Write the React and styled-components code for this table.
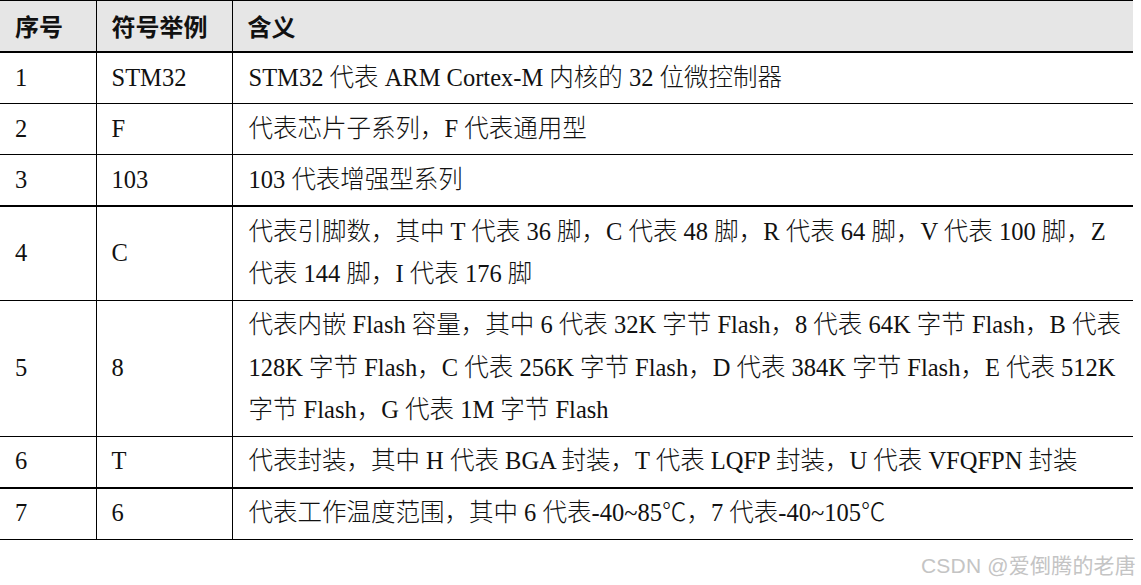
import styled, { createGlobalStyle } from 'styled-components';

const GlobalStyle = createGlobalStyle`
  html, body {
    margin: 0;
    padding: 0;
    background: #ffffff;
  }
  body {
    width: 1141px;
    height: 585px;
    overflow: hidden;
  }
`;

const Page = styled.div`
  position: relative;
  width: 1141px;
  height: 585px;
`;

const Table = styled.table`
  width: 1133px;
  border-collapse: collapse;
  table-layout: fixed;
  border-top: 1px solid #000;
  font-family: 'Liberation Serif', 'Noto Sans CJK SC', serif;
  font-size: 24.5px;
  font-weight: 300;
  color: #111;
`;

const Row = styled.tr`
  border-bottom: ${(p) => (p.$thick ? '2px' : '1px')} solid #000;
`;

const HeadCell = styled.th`
  background: #e6e6e6;
  text-align: left;
  font-family: 'Noto Sans CJK SC', sans-serif;
  font-weight: 700;
  font-size: 24px;
  line-height: 42.5px;
  padding: 3.75px 15px;
  & + & {
    border-left: 1px solid #000;
  }
`;

const Cell = styled.td`
  vertical-align: middle;
  line-height: 42.5px;
  padding: 3.75px 15px 3.75px ${(p) => (p.$wide ? '16px' : '15px')};
  & + & {
    border-left: 1px solid #000;
  }
`;

const Line = styled.div`
  white-space: nowrap;
`;

const Watermark = styled.div`
  position: absolute;
  right: 5px;
  bottom: 6px;
  font-family: 'Liberation Sans', 'Noto Sans CJK SC', sans-serif;
  font-size: 21px;
  color: #c4c4c4;
  letter-spacing: 0.2px;
`;

const rows = [
  { no: '1', sym: 'STM32', lines: ['STM32 代表 ARM Cortex-M 内核的 32 位微控制器'] },
  { no: '2', sym: 'F', lines: ['代表芯片子系列，F 代表通用型'] },
  { no: '3', sym: '103', lines: ['103 代表增强型系列'], thick: true },
  {
    no: '4',
    sym: 'C',
    lines: [
      '代表引脚数，其中 T 代表 36 脚，C 代表 48 脚，R 代表 64 脚，V 代表 100 脚，Z',
      '代表 144 脚，I 代表 176 脚',
    ],
  },
  {
    no: '5',
    sym: '8',
    lines: [
      '代表内嵌 Flash 容量，其中 6 代表 32K 字节 Flash，8 代表 64K 字节 Flash，B 代表',
      '128K 字节 Flash，C 代表 256K 字节 Flash，D 代表 384K 字节 Flash，E 代表 512K',
      '字节 Flash，G 代表 1M 字节 Flash',
    ],
  },
  {
    no: '6',
    sym: 'T',
    lines: ['代表封装，其中 H 代表 BGA 封装，T 代表 LQFP 封装，U 代表 VFQFPN 封装'],
    thick: true,
  },
  { no: '7', sym: '6', lines: ['代表工作温度范围，其中 6 代表-40~85℃，7 代表-40~105℃'] },
];

const App = () => {
  return (
    <Page>
      <GlobalStyle />
      <Table>
        <colgroup>
          <col style={{ width: '96px' }} />
          <col style={{ width: '136px' }} />
          <col />
        </colgroup>
        <thead>
          <Row $thick>
            <HeadCell>序号</HeadCell>
            <HeadCell>符号举例</HeadCell>
            <HeadCell>含义</HeadCell>
          </Row>
        </thead>
        <tbody>
          {rows.map((r) => (
            <Row key={r.no} $thick={r.thick}>
              <Cell>{r.no}</Cell>
              <Cell>{r.sym}</Cell>
              <Cell $wide>
                {r.lines.map((l) => (
                  <Line key={l}>{l}</Line>
                ))}
              </Cell>
            </Row>
          ))}
        </tbody>
      </Table>
      <Watermark>CSDN @爱倒腾的老唐</Watermark>
    </Page>
  );
};

export default App;
